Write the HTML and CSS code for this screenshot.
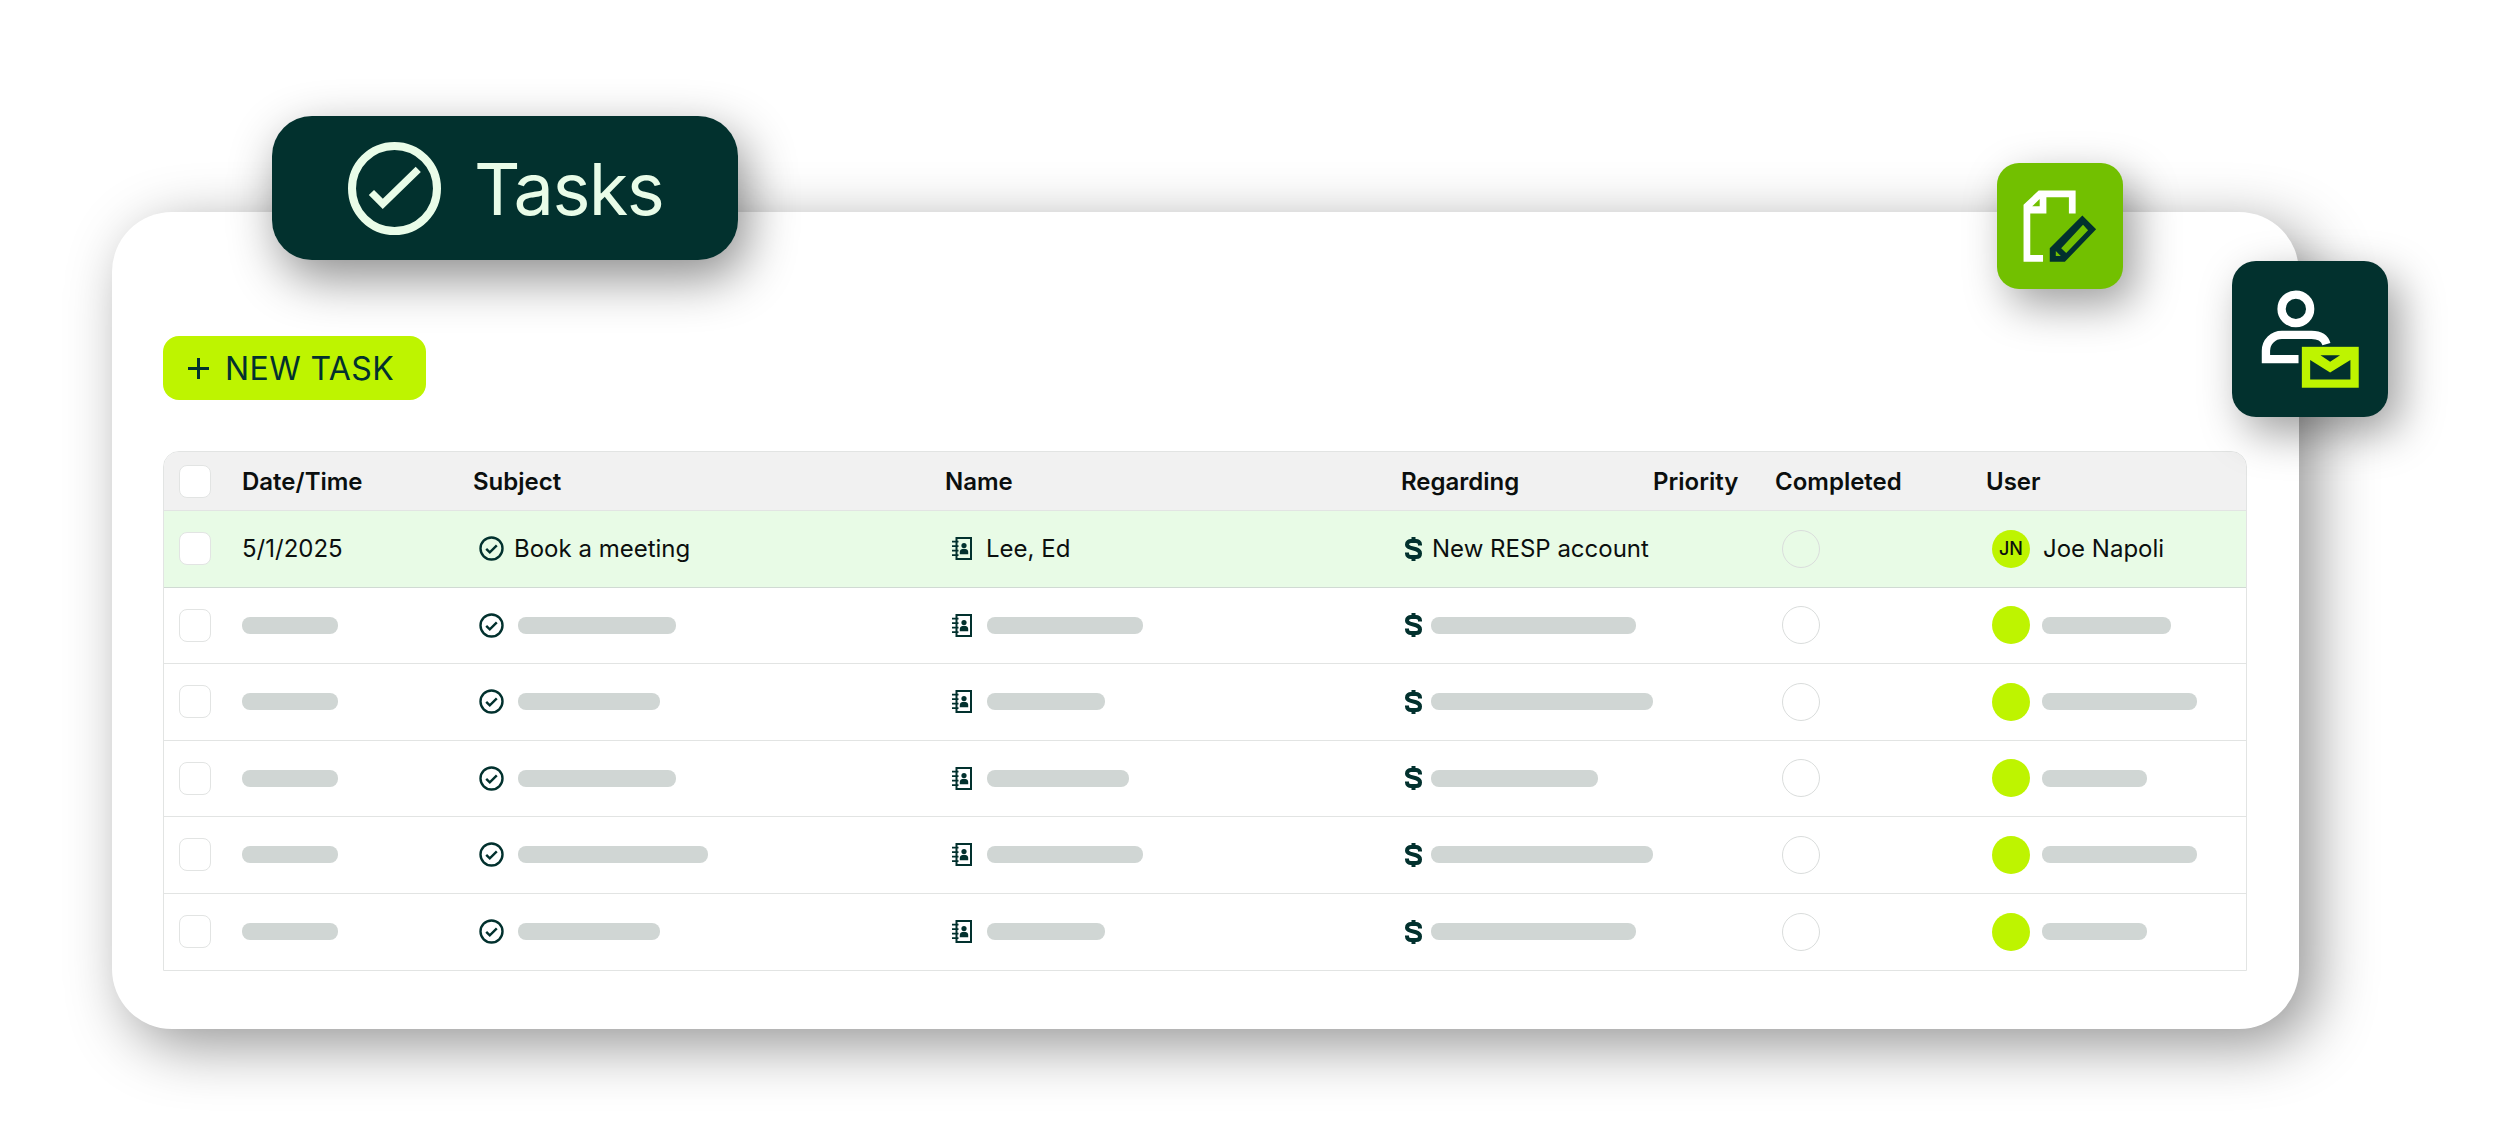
FILE: index.html
```html
<!DOCTYPE html>
<html lang="en">
<head>
    <meta charset="UTF-8">
    <title>Tasks</title>
    <link rel="stylesheet" href="styles.css">
</head>
<body>
    <svg class="sprites" width="0" height="0">
        <symbol id="i-check" viewBox="0 0 25 25">
            <circle cx="12.5" cy="12.5" r="11" fill="none" stroke="currentColor" stroke-width="2.4"/>
            <path d="M7.2 12.8l3.6 3.6 7-7" fill="none" stroke="currentColor" stroke-width="2.4"/>
        </symbol>
        <symbol id="i-book" viewBox="0 0 20 23">
            <rect x="4.500" y="1" width="14.500" height="21" fill="none" stroke="currentColor" stroke-width="2"/>
            <path d="M0 3.800h6.500v1.700H0zM0 8.300h6.500V10H0zM0 12.800h6.500v1.700H0zM0 17.300h6.500V19H0z" fill="currentColor"/>
            <circle cx="12" cy="8.500" r="2.600" fill="currentColor"/>
            <path d="M7.800 17.200v-2.400c0-1.800 1.800-3 4.200-3s4.200 1.200 4.200 3v2.400z" fill="currentColor"/>
        </symbol>
        <symbol id="i-dollar" viewBox="0 0 17 24">
            <path d="M15 8.600V7.500C15 5 13 4 11 4H6C4 4 2 5 2 7.500S4 10.200 6 10.800L11 12.200C13 12.800 15 13.500 15 16.500S13 20 11 20H6C4 20 2 19 2 16.500V15.400" fill="none" stroke="currentColor" stroke-width="4"/>
            <path d="M8.500 0v4M8.500 20v4" fill="none" stroke="currentColor" stroke-width="4"/>
        </symbol>
    </svg>

    <div class="card">
        <div class="title-pill">
            <svg class="title-icon" viewBox="324 156 278 278">
                <circle cx="463" cy="295" r="127" fill="none" stroke="currentColor" stroke-width="24"/>
                <path d="M394 307l34 34 106-103" fill="none" stroke="currentColor" stroke-width="22"/>
            </svg>
            <span>Tasks</span>
        </div>

        <div class="tile tile-green">
            <svg viewBox="113 68 375 375">
                <path d="M192 192L237 150H347V218H327V170H260V218H212V342H250V362H192Z" fill="#fff"/>
                <path d="M218 197L240 175V197Z" fill="#72c000"/>
                <path fill-rule="evenodd" d="M270 362V322L367 224 408 265 315 362ZM304 322L319 336 384 268 369 252ZM288 330V345H303Z" fill="#02312e"/>
            </svg>
        </div>

        <div class="tile tile-dark">
            <svg viewBox="816 362 469 469">
                <circle cx="1008" cy="506" r="43" fill="none" stroke="#fff" stroke-width="25"/>
                <path d="M1016 657H918V632A48 48 0 0 1 966 584H1055C1080 584 1095 595 1100 612" fill="none" stroke="#fff" stroke-width="25"/>
                <rect x="1026" y="620" width="171" height="123" fill="#bef400"/>
                <path d="M1051 660L1111 697 1172 660V718H1051ZM1082 645H1141L1111 665Z" fill="#02312e"/>
            </svg>
        </div>

        <button class="new-task">
            <svg class="plus" viewBox="0 0 21 21"><path d="M10.500 0v21M0 10.500h21" stroke="currentColor" stroke-width="3"/></svg>
            NEW TASK
        </button>

        <div class="task-table">
            <div class="row head">
                <div class="cell"><span class="box"></span></div>
                <div class="cell">Date/Time</div>
                <div class="cell">Subject</div>
                <div class="cell">Name</div>
                <div class="cell">Regarding</div>
                <div class="cell">Priority</div>
                <div class="cell">Completed</div>
                <div class="cell">User</div>
            </div>

            <div class="row active">
                <div class="cell"><span class="box"></span></div>
                <div class="cell">5/1/2025</div>
                <div class="cell subject"><svg class="ico-check"><use href="#i-check"/></svg>Book a meeting</div>
                <div class="cell name"><svg class="ico-book"><use href="#i-book"/></svg>Lee, Ed</div>
                <div class="cell regarding"><svg class="ico-dollar"><use href="#i-dollar"/></svg>New RESP account</div>
                <div class="cell"></div>
                <div class="cell"><span class="done"></span></div>
                <div class="cell user"><span class="avatar">JN</span>Joe Napoli</div>
            </div>

            <div class="row">
                <div class="cell"><span class="box"></span></div>
                <div class="cell"><span class="bar bar-date"></span></div>
                <div class="cell subject"><svg class="ico-check"><use href="#i-check"/></svg><span class="bar" style="width:158px"></span></div>
                <div class="cell name"><svg class="ico-book"><use href="#i-book"/></svg><span class="bar" style="width:156px"></span></div>
                <div class="cell regarding"><svg class="ico-dollar"><use href="#i-dollar"/></svg><span class="bar" style="width:205px"></span></div>
                <div class="cell"></div>
                <div class="cell"><span class="done"></span></div>
                <div class="cell user"><span class="avatar"></span><span class="bar" style="width:129px"></span></div>
            </div>

            <div class="row">
                <div class="cell"><span class="box"></span></div>
                <div class="cell"><span class="bar bar-date"></span></div>
                <div class="cell subject"><svg class="ico-check"><use href="#i-check"/></svg><span class="bar" style="width:142px"></span></div>
                <div class="cell name"><svg class="ico-book"><use href="#i-book"/></svg><span class="bar" style="width:118px"></span></div>
                <div class="cell regarding"><svg class="ico-dollar"><use href="#i-dollar"/></svg><span class="bar" style="width:226px"></span></div>
                <div class="cell"></div>
                <div class="cell"><span class="done"></span></div>
                <div class="cell user"><span class="avatar"></span><span class="bar" style="width:155px"></span></div>
            </div>

            <div class="row">
                <div class="cell"><span class="box"></span></div>
                <div class="cell"><span class="bar bar-date"></span></div>
                <div class="cell subject"><svg class="ico-check"><use href="#i-check"/></svg><span class="bar" style="width:158px"></span></div>
                <div class="cell name"><svg class="ico-book"><use href="#i-book"/></svg><span class="bar" style="width:142px"></span></div>
                <div class="cell regarding"><svg class="ico-dollar"><use href="#i-dollar"/></svg><span class="bar" style="width:167px"></span></div>
                <div class="cell"></div>
                <div class="cell"><span class="done"></span></div>
                <div class="cell user"><span class="avatar"></span><span class="bar" style="width:105px"></span></div>
            </div>

            <div class="row">
                <div class="cell"><span class="box"></span></div>
                <div class="cell"><span class="bar bar-date"></span></div>
                <div class="cell subject"><svg class="ico-check"><use href="#i-check"/></svg><span class="bar" style="width:190px"></span></div>
                <div class="cell name"><svg class="ico-book"><use href="#i-book"/></svg><span class="bar" style="width:156px"></span></div>
                <div class="cell regarding"><svg class="ico-dollar"><use href="#i-dollar"/></svg><span class="bar" style="width:226px"></span></div>
                <div class="cell"></div>
                <div class="cell"><span class="done"></span></div>
                <div class="cell user"><span class="avatar"></span><span class="bar" style="width:155px"></span></div>
            </div>

            <div class="row">
                <div class="cell"><span class="box"></span></div>
                <div class="cell"><span class="bar bar-date"></span></div>
                <div class="cell subject"><svg class="ico-check"><use href="#i-check"/></svg><span class="bar" style="width:142px"></span></div>
                <div class="cell name"><svg class="ico-book"><use href="#i-book"/></svg><span class="bar" style="width:118px"></span></div>
                <div class="cell regarding"><svg class="ico-dollar"><use href="#i-dollar"/></svg><span class="bar" style="width:205px"></span></div>
                <div class="cell"></div>
                <div class="cell"><span class="done"></span></div>
                <div class="cell user"><span class="avatar"></span><span class="bar" style="width:105px"></span></div>
            </div>
        </div>
    </div>
</body>
</html>
```
FILE: styles.css
```css
:root {
    --dark: #02312e;
    --lime: #bef400;
    --line: #e2e4e3;
    --skeleton: #d0d6d4;
}

* {
    margin: 0;
    padding: 0;
    box-sizing: border-box;
}

body {
    height: 1146px;
    padding: 212px 0 0 112px;
    background-color: #fff;
    color: #0b0f0e;
    font-family: Inter, "Liberation Sans", sans-serif;
    overflow: hidden;
}

.sprites {
    position: absolute;
}

.card {
    position: relative;
    width: 2187px;
    height: 817px;
    padding: 124px 0 0 51px;
    background-color: #fff;
    border-radius: 60px;
    box-shadow: 16px 16px 60px rgba(0, 0, 0, 0.42);
}

.title-pill {
    position: absolute;
    left: 160px;
    top: -96px;
    width: 466px;
    height: 144px;
    padding-left: 76px;
    display: flex;
    align-items: center;
    gap: 33px;
    background-color: var(--dark);
    color: #e9fce8;
    border-radius: 40px;
    font-size: 72px;
    letter-spacing: -1.6px;
    box-shadow: 8px 18px 50px rgba(0, 0, 0, 0.45);
}

.title-icon {
    width: 93px;
    height: 93px;
}

.tile {
    position: absolute;
    box-shadow: 12px 16px 44px rgba(0, 0, 0, 0.38);
}

.tile svg {
    display: block;
    width: 100%;
    height: 100%;
}

.tile-green {
    left: 1885px;
    top: -49px;
    width: 126px;
    height: 126px;
    background-color: #72c000;
    border-radius: 22px;
}

.tile-dark {
    left: 2120px;
    top: 49px;
    width: 156px;
    height: 156px;
    background-color: var(--dark);
    border-radius: 24px;
}

.new-task {
    display: flex;
    align-items: center;
    gap: 16px;
    width: 263px;
    height: 64px;
    padding-left: 25px;
    background-color: var(--lime);
    color: var(--dark);
    border: none;
    border-radius: 16px;
    font-family: inherit;
    font-size: 32px;
    letter-spacing: 0.4px;
}

.plus {
    width: 21px;
    height: 21px;
}

.task-table {
    width: 2084px;
    margin-top: 51px;
    border: 1px solid var(--line);
    border-radius: 16px 16px 0 0;
    overflow: hidden;
    font-size: 24px;
}

.row {
    display: grid;
    grid-template-columns: 78px 231px 472px 456px 252px 122px 211px 1fr;
    height: 76.5px;
    border-bottom: 1px solid var(--line);
}

.row:last-child {
    border-bottom: none;
}

.head {
    height: 59px;
    background-color: #f1f1f1;
    font-weight: 600;
}

.active {
    background-color: #e8fbe6;
    border-bottom-color: #d0dad3;
}

.cell {
    display: flex;
    align-items: center;
    white-space: nowrap;
}

.box {
    width: 32px;
    height: 33px;
    margin-left: 15px;
    background-color: #fff;
    border: 1px solid var(--line);
    border-radius: 8px;
}

.bar {
    height: 17px;
    background-color: var(--skeleton);
    border-radius: 8px;
}

.bar-date {
    width: 96px;
}

.ico-check,
.ico-book,
.ico-dollar {
    flex-shrink: 0;
    color: var(--dark);
}

.ico-check {
    width: 25px;
    height: 25px;
    margin: 0 10px 0 6px;
}

.ico-book {
    width: 20px;
    height: 23px;
    margin: 0 14px 0 7px;
}

.ico-dollar {
    width: 17px;
    height: 24px;
    margin: 0 10px 0 4px;
}

.subject .bar {
    margin-left: 4px;
}

.name .bar {
    margin-left: 1px;
}

.regarding .bar,
.user .bar {
    margin-left: -1px;
}

.done {
    width: 38px;
    height: 38px;
    margin-left: 7px;
    border: 1px solid #dadddc;
    border-radius: 50%;
}

.avatar {
    width: 38px;
    height: 38px;
    margin: 0 13px 0 6px;
    display: flex;
    align-items: center;
    justify-content: center;
    background-color: var(--lime);
    border-radius: 50%;
    font-size: 18px;
    font-weight: 500;
}
```
